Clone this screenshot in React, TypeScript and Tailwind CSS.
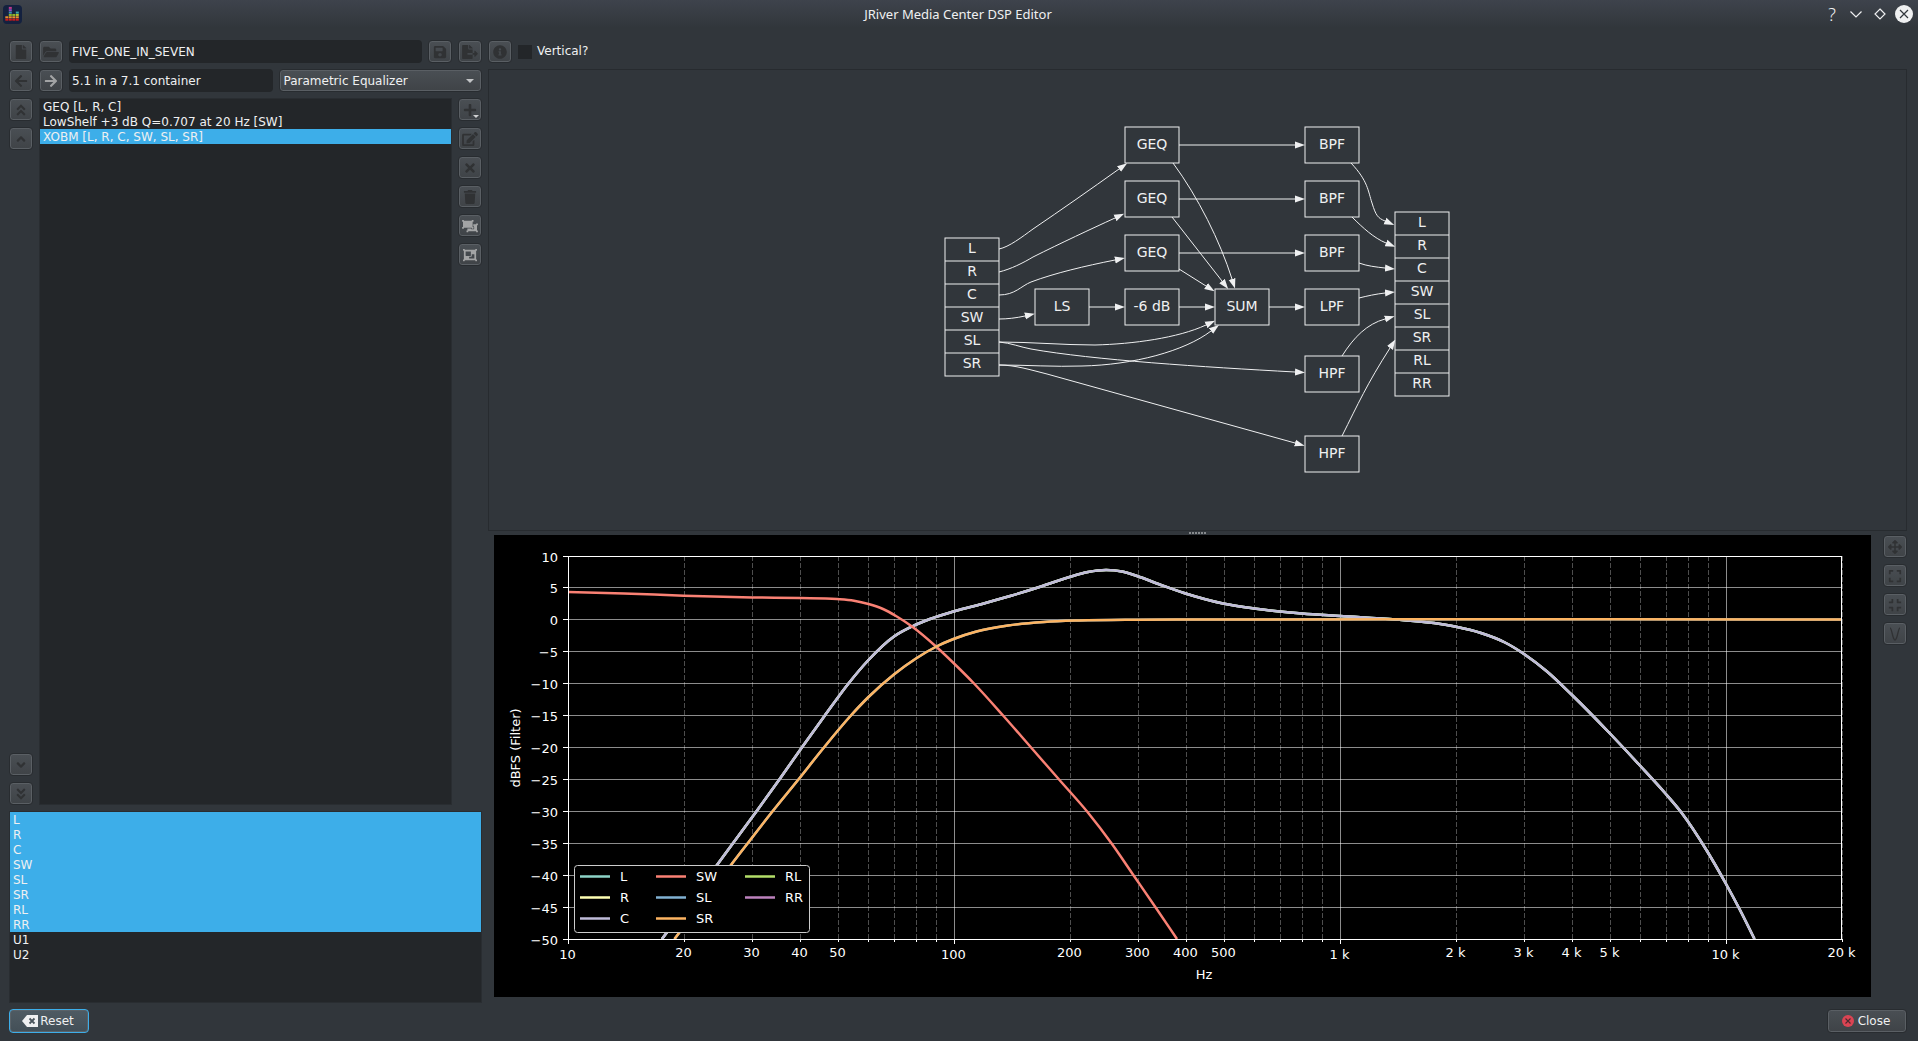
import React, { useState } from "react";
import {
  FaAngleDoubleDown,
  FaAngleDoubleUp,
  FaAngleDown,
  FaAngleUp,
  FaArrowLeft,
  FaArrowRight,
  FaArrowsAlt,
  FaCompress,
  FaEdit,
  FaExpand,
  FaFile,
  FaFileExport,
  FaFolderOpen,
  FaInfoCircle,
  FaObjectGroup,
  FaObjectUngroup,
  FaPlus,
  FaSave,
  FaTimes,
  FaTrash,
} from "react-icons/fa";

type Point = [number, number];

/* ---------- shared controls ---------- */

function ToolButton({
  label,
  active = false,
  menu = false,
  children,
}: {
  label: string;
  active?: boolean;
  menu?: boolean;
  children: React.ReactNode;
}) {
  return (
    <button
      type="button"
      aria-label={label}
      title={label}
      className={
        "relative flex h-[23px] w-6 shrink-0 items-center justify-center rounded border border-[#282c30] bg-gradient-to-b from-[#4a4f54] to-[#3f4347] shadow-[inset_0_0_0_1px_#5a5f64] [&>svg]:h-[14px] [&>svg]:w-4 " +
        (active ? "text-[#a3a4a5]" : "text-[#303234]")
      }
    >
      {children}
      {menu && (
        <span className="absolute right-[2px] bottom-[2px] border-x-[3px] border-t-[3px] border-x-transparent border-t-[#d0d1d2]" />
      )}
    </button>
  );
}

/* ---------- title bar ---------- */

const METER_COLUMNS = [
  ["#e8912d", "#d11a1a"],
  ["#c03a8c", "#8d4fc4", "#3f8fb5", "#8db52a", "#e8912d", "#d11a1a"],
  ["#8db52a", "#e8912d", "#d11a1a"],
  ["#3aa6a6", "#b9c22a", "#e8912d", "#d11a1a"],
];

function AppIcon() {
  return (
    <svg viewBox="0 0 19 19" className="h-[19px] w-[19px]" aria-hidden="true">
      <rect width="19" height="19" rx="4" fill="#14213f" />
      {METER_COLUMNS.map((cells, c) =>
        cells.map((color, i) => (
          <rect
            key={`${c}-${i}`}
            x={2.3 + c * 3.5}
            y={16 - (cells.length - i) * 2.35}
            width="3"
            height="2"
            fill={color}
          />
        ))
      )}
    </svg>
  );
}

function TitleBar() {
  const control = "flex h-[18px] w-[18px] items-center justify-center";
  return (
    <header className="grid h-7 shrink-0 grid-cols-[1fr_auto_1fr] items-center bg-gradient-to-b from-[#3e434c] to-[#31363b] pr-[5px] pl-[3px]">
      <AppIcon />
      <h1 className="font-['Noto_Sans',sans-serif] text-[13px]">JRiver Media Center DSP Editor</h1>
      <div className="flex items-center justify-end gap-1.5">
        <button type="button" aria-label="Help" className={control + " font-['Noto_Sans',sans-serif] text-[18px] leading-none font-light"}>
          ?
        </button>
        <button type="button" aria-label="Minimize" className={control}>
          <svg viewBox="0 0 18 18" className="h-full w-full" fill="none" stroke="currentColor" strokeWidth="1.2">
            <path d="M3.5 6.5 9 12l5.500-5.500" />
          </svg>
        </button>
        <button type="button" aria-label="Restore" className={control}>
          <svg viewBox="0 0 18 18" className="h-full w-full" fill="none" stroke="currentColor" strokeWidth="1.2">
            <path d="M9 4 14 9 9 14 4 9Z" />
          </svg>
        </button>
        <button type="button" aria-label="Close window" className={control}>
          <svg viewBox="0 0 18 18" className="h-full w-full">
            <circle cx="9" cy="9" r="9" fill="#eff0f1" />
            <path d="M5 5 13 13M13 5 5 13" stroke="#31363b" strokeWidth="1.2" />
          </svg>
        </button>
      </div>
    </header>
  );
}

/* ---------- left column ---------- */

function SelectableList({
  label,
  items,
  initial,
  className,
}: {
  label: string;
  items: string[];
  initial: string[];
  className: string;
}) {
  const [selected, setSelected] = useState(initial);
  const toggle = (item: string) =>
    setSelected((s) => (s.includes(item) ? s.filter((x) => x !== item) : [...s, item]));
  return (
    <ul
      role="listbox"
      aria-label={label}
      aria-multiselectable="true"
      className={"overflow-hidden border border-[#292d31] bg-[#232629] " + className}
    >
      {items.map((item) => (
        <li
          key={item}
          role="option"
          aria-selected={selected.includes(item)}
          onClick={() => toggle(item)}
          className={"h-[15px] px-[3px] leading-[17px] " + (selected.includes(item) ? "bg-[#3daee9]" : "")}
        >
          {item}
        </li>
      ))}
    </ul>
  );
}

const FILTERS = ["GEQ [L, R, C]", "LowShelf +3 dB Q=0.707 at 20 Hz [SW]", "XOBM [L, R, C, SW, SL, SR]"];
const CHANNELS = ["L", "R", "C", "SW", "SL", "SR", "RL", "RR", "U1", "U2"];

function FilterColumn() {
  const field = "h-[23px] min-w-0 rounded bg-[#232629] px-[3px] outline-none";
  return (
    <section className="flex w-[473px] shrink-0 flex-col gap-1.5">
      <div className="flex gap-1.5">
        <ToolButton label="New configuration"><FaFile /></ToolButton>
        <ToolButton label="Open configuration"><FaFolderOpen /></ToolButton>
        <input aria-label="Configuration name" defaultValue="FIVE_ONE_IN_SEVEN" className={field + " flex-1"} />
        <ToolButton label="Save"><FaSave /></ToolButton>
        <ToolButton label="Save as"><FaFileExport /></ToolButton>
      </div>
      <div className="flex gap-1.5">
        <ToolButton label="Previous"><FaArrowLeft /></ToolButton>
        <ToolButton label="Next" active><FaArrowRight /></ToolButton>
        <div className="grid flex-1 grid-cols-2 gap-1.5">
          <input aria-label="Output format" defaultValue="5.1 in a 7.1 container" className={field} />
          <div className="relative">
            <select
              aria-label="DSP block"
              defaultValue="Parametric Equalizer"
              className="h-[23px] w-full appearance-none rounded border border-[#282c30] bg-gradient-to-b from-[#4a4f54] to-[#3f4347] px-1 pt-px shadow-[inset_0_0_0_1px_#5a5f64] outline-none"
            >
              <option>Parametric Equalizer</option>
            </select>
            <span className="pointer-events-none absolute top-[10px] right-2 border-x-4 border-t-4 border-x-transparent border-t-[#c3c5c7]" />
          </div>
        </div>
      </div>
      <div className="flex min-h-0 flex-1 gap-1.5">
        <div className="flex flex-col gap-1.5">
          <ToolButton label="Move to top"><FaAngleDoubleUp /></ToolButton>
          <ToolButton label="Move up"><FaAngleUp /></ToolButton>
          <div className="flex-1" />
          <ToolButton label="Move down"><FaAngleDown /></ToolButton>
          <ToolButton label="Move to bottom"><FaAngleDoubleDown /></ToolButton>
        </div>
        <SelectableList label="Filters" items={FILTERS} initial={[FILTERS[2]]} className="flex-1" />
        <div className="flex flex-col gap-1.5">
          <ToolButton label="Add filter" menu><FaPlus /></ToolButton>
          <ToolButton label="Edit filter"><FaEdit /></ToolButton>
          <ToolButton label="Delete filter"><FaTimes /></ToolButton>
          <ToolButton label="Clear filters"><FaTrash /></ToolButton>
          <ToolButton label="Split filter" active><FaObjectUngroup /></ToolButton>
          <ToolButton label="Merge filters" active><FaObjectGroup /></ToolButton>
        </div>
      </div>
      <SelectableList
        label="Channels"
        items={CHANNELS}
        initial={CHANNELS.slice(0, 8)}
        className="h-48 shrink-0"
      />
    </section>
  );
}

/* ---------- signal flow diagram ---------- */

const NODES: { x: number; y: number; text: string }[] = [
  { x: 182, y: 2, text: "GEQ" },
  { x: 182, y: 56, text: "GEQ" },
  { x: 182, y: 110, text: "GEQ" },
  { x: 92, y: 164, text: "LS" },
  { x: 182, y: 164, text: "-6 dB" },
  { x: 272, y: 164, text: "SUM" },
  { x: 362, y: 2, text: "BPF" },
  { x: 362, y: 56, text: "BPF" },
  { x: 362, y: 110, text: "BPF" },
  { x: 362, y: 164, text: "LPF" },
  { x: 362, y: 231, text: "HPF" },
  { x: 362, y: 311, text: "HPF" },
];

const RECORDS = [
  { x: 2, y: 113, ports: ["L", "R", "C", "SW", "SL", "SR"] },
  { x: 452, y: 87, ports: ["L", "R", "C", "SW", "SL", "SR", "RL", "RR"] },
];

const EDGES = [
  "M56 124C66 122 79 112 90 104C118 85 148 64 176 44",
  "M56 147C68 144 80 138 90 132C118 118 148 104 172 93",
  "M56 170C72 170 78 161 88 157C112 148 142 141 172 135",
  "M56 194C64 194 73 193 82 191",
  "M56 217C88 217 120 220 152 220C190 219 235 213 263 200",
  "M56 217C68 218 77 222 88 224C150 235 260 242 352 247",
  "M56 240C84 240 112 242 139 241C190 240 242 226 268 206",
  "M56 240C72 240 88 245 104 249L352 318",
  "M236 20H352",
  "M236 74H352",
  "M236 128H352",
  "M146 182H172",
  "M236 182H262",
  "M326 182H352",
  "M230 38C255 72 277 116 289 154",
  "M229 92L279 156",
  "M236 144L263 161",
  "M408 38C425 56 425 66 429 78C433 91 435 93 442 96",
  "M409 92C420 103 431 113 443 118",
  "M416 138C424 141 433 142 442 143",
  "M416 173C424 171 433 169 442 168",
  "M399 231C411 212 424 199 442 194",
  "M399 311C415 279 424 259 447 223",
];

function FlowDiagram() {
  return (
    <svg
      viewBox="0 0 509 350"
      className="h-[350px] w-[509px] max-w-full"
      role="img"
      aria-label="Signal flow from input channels to output channels"
    >
      <defs>
        <marker id="arrow" viewBox="0 0 10 8" refX="0" refY="4" markerWidth="10" markerHeight="8" markerUnits="userSpaceOnUse" orient="auto">
          <path d="M0 0.500 10 4 0 7.500Z" fill="#eff0f1" />
        </marker>
      </defs>
      <g fill="none" stroke="#eff0f1">
        {EDGES.map((d) => (
          <path key={d} d={d} markerEnd="url(#arrow)" />
        ))}
        {NODES.map((n) => (
          <rect key={`${n.x}-${n.y}`} x={n.x} y={n.y} width="54" height="36" />
        ))}
        {RECORDS.map((r) => (
          <g key={r.x}>
            <rect x={r.x} y={r.y} width="54" height={r.ports.length * 23} />
            {r.ports.slice(1).map((p, i) => (
              <path key={p} d={`M${r.x} ${r.y + (i + 1) * 23}h54`} />
            ))}
          </g>
        ))}
      </g>
      <g fill="#eff0f1" fontSize="14" textAnchor="middle">
        {NODES.map((n) => (
          <text key={`${n.x}-${n.y}`} x={n.x + 27} y={n.y + 22}>{n.text}</text>
        ))}
        {RECORDS.map((r) =>
          r.ports.map((p, i) => (
            <text key={`${r.x}-${p}`} x={r.x + 27} y={r.y + i * 23 + 15}>{p}</text>
          ))
        )}
      </g>
    </svg>
  );
}

/* ---------- frequency response chart ---------- */

const LEFT = 74;
const RIGHT = 1347;
const TOP = 21;
const BOTTOM = 404;
const DECADE = 386;

const xOf = (hz: number) => Math.floor(LEFT + 0.3 + Math.log10(hz / 10) * DECADE) + 0.5;
const yOf = (db: number) => Math.floor(TOP + (10 - db) * 6.385) + 0.5;

const DB_TICKS = [10, 5, 0, -5, -10, -15, -20, -25, -30, -35, -40, -45, -50];
const MAJOR = [10, 100, 1000, 10000];
const MINOR = [10, 100, 1000]
  .flatMap((d) => [2, 3, 4, 5, 6, 7, 8, 9].map((m) => m * d))
  .concat(20000);
const MINOR_LABELS = [20, 30, 40, 50, 200, 300, 400, 500, 2000, 3000, 4000, 5000, 20000];
const hzText = (hz: number) => (hz >= 1000 ? `${hz / 1000} k` : `${hz}`);

const MAINS: Point[] = [
  [168, 404], [223, 330], [262, 277], [285, 245], [307.500, 213], [330.500, 181],
  [354.500, 148.500], [374.500, 125], [400, 101.500], [418, 91.500], [436, 84], [459.500, 76.500],
  [491.500, 68], [518, 60.500], [547, 51.500], [575.500, 42], [594, 37], [612, 35], [628, 36.500], [643, 41],
  [667, 50], [690, 58], [729, 68.500], [760, 73.500], [808, 78.500], [846, 81], [902, 84.500],
  [940, 88], [961, 91.500], [987, 98], [1011, 107.500], [1030, 119], [1053, 136.500], [1077.500, 159.500],
  [1115, 197.500], [1145, 229.500], [1171, 258], [1187, 277], [1213, 316],
  [1231.500, 348], [1246, 375], [1260.500, 404],
];
const SUBWOOFER: Point[] = [
  [74, 57], [130, 58.500], [190, 60.700], [258, 62.500], [306, 63], [343, 64], [360, 65.700], [374.500, 69],
  [389, 74], [402, 81], [418, 91.500], [442, 111.500], [459.500, 128], [480.500, 149], [509.500, 181],
  [537.500, 213], [565.500, 245], [593.500, 277], [618, 309], [640, 341],
  [662, 373], [683, 404],
];
const SURROUNDS: Point[] = [
  [180.500, 404], [237, 330], [278, 277], [304, 245], [329.500, 213], [356, 181.500],
  [374.500, 162], [400.500, 139], [422, 123.500], [442.500, 111.500], [459.500, 104], [482.500, 96.500],
  [514, 90.500], [550, 87], [585, 85.500], [643, 84.700], [700, 84.500], [1347, 84.500],
];

const slope = (a: Point, b: Point) => (b[1] - a[1]) / (b[0] - a[0]);

/** Smooth path through unevenly spaced points, with tangents weighted by spacing. */
function smooth(points: Point[]): string {
  const last = points.length - 1;
  const tangents = points.map((p, i) => {
    if (i === 0) return slope(p, points[1]);
    if (i === last) return slope(points[last - 1], p);
    const h1 = p[0] - points[i - 1][0];
    const h2 = points[i + 1][0] - p[0];
    return (slope(points[i - 1], p) * h2 + slope(p, points[i + 1]) * h1) / (h1 + h2);
  });
  let d = `M${points[0][0]} ${points[0][1]}`;
  for (let i = 0; i < last; i++) {
    const [x1, y1] = points[i];
    const [x2, y2] = points[i + 1];
    const third = (x2 - x1) / 3;
    d += `C${x1 + third} ${y1 + tangents[i] * third} ${x2 - third} ${y2 - tangents[i + 1] * third} ${x2} ${y2}`;
  }
  return d;
}

const CURVES: { color: string; points: Point[] }[] = [
  { color: "#8dd3c7", points: MAINS },
  { color: "#feffb3", points: MAINS },
  { color: "#bfbbd9", points: MAINS },
  { color: "#fa8174", points: SUBWOOFER },
  { color: "#81b1d2", points: SURROUNDS },
  { color: "#fdb462", points: SURROUNDS },
];

const LEGEND = [
  { x: 86, items: [["L", "#8dd3c7"], ["R", "#feffb3"], ["C", "#bfbbd9"]] },
  { x: 162, items: [["SW", "#fa8174"], ["SL", "#81b1d2"], ["SR", "#fdb462"]] },
  { x: 251, items: [["RL", "#b3de69"], ["RR", "#bc82bd"]] },
];

function ResponseChart() {
  return (
    <svg
      viewBox="0 0 1377 462"
      className="h-full min-w-0 flex-1 bg-black"
      role="img"
      aria-label="Filter response by channel"
      fontSize="13"
      fill="#ffffff"
    >
      <g stroke="#ffffff" strokeOpacity="0.550">
        {DB_TICKS.map((db) => (
          <line key={db} x1={LEFT} x2={RIGHT} y1={yOf(db)} y2={yOf(db)} />
        ))}
        {MAJOR.map((hz) => (
          <line key={hz} x1={xOf(hz)} x2={xOf(hz)} y1={TOP} y2={BOTTOM} />
        ))}
      </g>
      <g stroke="#ffffff" strokeOpacity="0.300" strokeDasharray="5 2">
        {MINOR.map((hz) => (
          <line key={hz} x1={xOf(hz)} x2={xOf(hz)} y1={BOTTOM} y2={TOP} />
        ))}
      </g>
      <g fill="none" strokeWidth="2.5">
        {CURVES.map((c) => (
          <path key={c.color} d={smooth(c.points)} stroke={c.color} />
        ))}
      </g>
      <g stroke="#ffffff">
        <rect x={LEFT + 0.5} y={TOP + 0.5} width={RIGHT - LEFT} height={BOTTOM - TOP} fill="none" />
        {DB_TICKS.map((db) => (
          <line key={db} x1={LEFT - 5} x2={LEFT} y1={yOf(db)} y2={yOf(db)} />
        ))}
        {MAJOR.map((hz) => (
          <line key={hz} x1={xOf(hz)} x2={xOf(hz)} y1={BOTTOM} y2={BOTTOM + 5} />
        ))}
        {MINOR.map((hz) => (
          <line key={hz} x1={xOf(hz)} x2={xOf(hz)} y1={BOTTOM} y2={BOTTOM + 3} />
        ))}
      </g>
      <g textAnchor="end">
        {DB_TICKS.map((db) => (
          <text key={db} x="64" y={yOf(db) + 5}>{db < 0 ? `−${-db}` : db}</text>
        ))}
      </g>
      <g textAnchor="middle">
        {MAJOR.map((hz) => (
          <text key={hz} x={xOf(hz) - 1} y="424">{hzText(hz)}</text>
        ))}
        {MINOR_LABELS.map((hz) => (
          <text key={hz} x={xOf(hz) - 1} y="422">{hzText(hz)}</text>
        ))}
        <text x="710" y="444">Hz</text>
        <text transform="translate(26 213) rotate(-90)">dBFS (Filter)</text>
      </g>
      <rect x="80.500" y="330.500" width="235" height="67" rx="3" fill="#000000" stroke="#cccccc" />
      {LEGEND.map((col) =>
        col.items.map(([name, color], i) => (
          <g key={name}>
            <line x1={col.x} x2={col.x + 30} y1={341.5 + i * 21} y2={341.5 + i * 21} stroke={color} strokeWidth="2.5" />
            <text x={col.x + 40} y={346 + i * 21}>{name}</text>
          </g>
        ))
      )}
    </svg>
  );
}

function GraphColumn() {
  return (
    <section className="flex min-w-0 flex-1 flex-col gap-1.5">
      <div className="flex items-center gap-1.5">
        <ToolButton label="About this graph"><FaInfoCircle /></ToolButton>
        <label className="flex items-center gap-[5px] leading-[17px]">
          <input type="checkbox" className="h-[14px] w-[14px] appearance-none bg-[#232629] checked:bg-[#3daee9]" />
          Vertical?
        </label>
      </div>
      <div className="grid min-h-0 flex-1 grid-rows-[minmax(0,1fr)_4px_minmax(0,1fr)] pb-1.5">
        <div className="flex items-center justify-center overflow-hidden border border-[#272b2f]">
          <FlowDiagram />
        </div>
        <div className="flex items-center justify-center gap-px" aria-hidden="true">
          {[0, 1, 2, 3, 4, 5].map((i) => (
            <span key={i} className="h-[2px] w-[2px] bg-[#85898c]" />
          ))}
        </div>
        <div className="flex min-h-0 gap-3 pl-1.5">
          <ResponseChart />
          <div className="flex flex-col gap-1.5">
            <ToolButton label="Pan"><FaArrowsAlt /></ToolButton>
            <ToolButton label="Full range"><FaExpand /></ToolButton>
            <ToolButton label="Sub only"><FaCompress /></ToolButton>
            <ToolButton label="Limits">
              <svg viewBox="0 0 16 14" fill="none" stroke="currentColor" strokeWidth="1.300">
                <path d="M3 1C5 1 5.500 13 8 13S11 1 13 1" />
              </svg>
            </ToolButton>
          </div>
        </div>
      </div>
    </section>
  );
}

/* ---------- window ---------- */

export default function App() {
  return (
    <div className="flex h-screen min-h-[700px] flex-col bg-[#31363b] font-['DejaVu_Sans',sans-serif] text-[12px] leading-[15px] text-[#eff0f1]">
      <TitleBar />
      <main className="flex min-h-0 flex-1 gap-1.5 pt-3 pr-[11px] pl-[9px]">
        <FilterColumn />
        <GraphColumn />
      </main>
      <footer className="flex shrink-0 justify-between pt-1.5 pr-[11px] pb-2 pl-[9px]">
        <button
          type="button"
          className="flex h-6 w-20 items-center justify-center gap-0.5 rounded border border-[#3daee9] bg-gradient-to-b from-[#4f5b63] to-[#434f57] pr-0.5 leading-[17px] shadow-[inset_0_0_0_1px_#5a6268]"
        >
          <svg viewBox="0 0 16 12" className="h-3 w-4" aria-hidden="true">
            <path d="M0 6 5 0H16V12H5Z" fill="#eff0f1" />
            <path d="M7.500 3.500 12.500 8.500M12.500 3.500 7.500 8.500" stroke="#4a555c" strokeWidth="1.800" />
          </svg>
          Reset
        </button>
        <button
          type="button"
          className="flex h-6 w-20 items-center justify-center gap-1 rounded border border-[#282c30] bg-gradient-to-b from-[#4a4f54] to-[#3f4347] pr-0.5 leading-[17px] shadow-[inset_0_0_0_1px_#5a5f64]"
        >
          <svg viewBox="0 0 12 12" className="h-3 w-3" aria-hidden="true">
            <circle cx="6" cy="6" r="6" fill="#da4453" />
            <path d="M3.500 3.500 8.500 8.500M8.500 3.500 3.500 8.500" stroke="#4a2a30" strokeWidth="1.100" />
          </svg>
          Close
        </button>
      </footer>
    </div>
  );
}
